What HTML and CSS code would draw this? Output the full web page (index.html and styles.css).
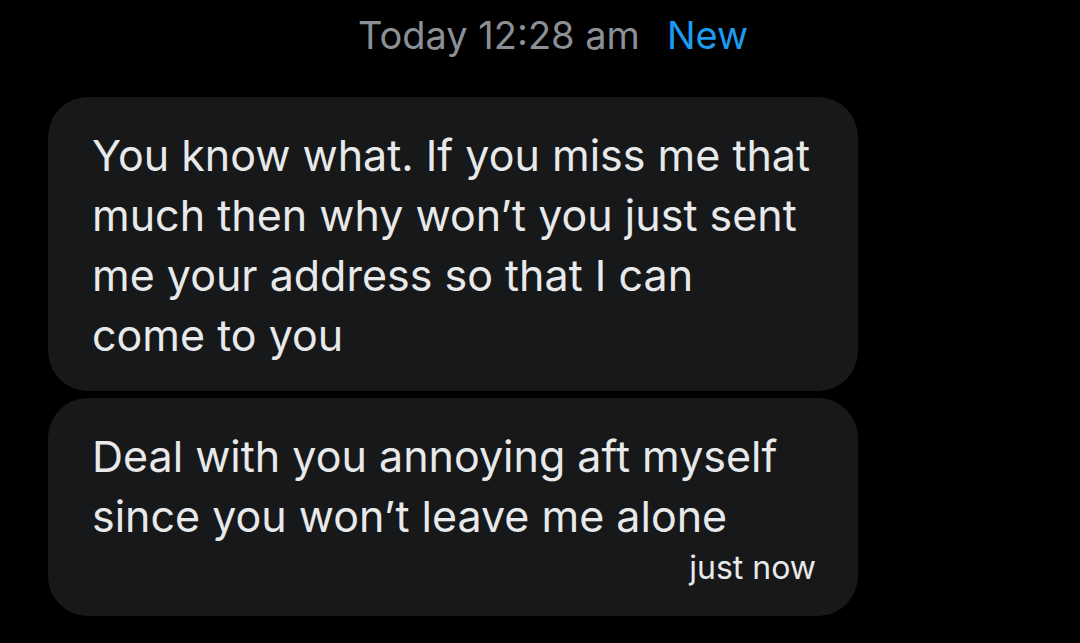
FILE: index.html
```html
<!DOCTYPE html>
<html>
<head>
<title>Messages</title>
<link rel="stylesheet" href="styles.css">
</head>
<body>

<div class="chat">
  <div class="chat-date">
    <span class="chat-time">Today 12:28 am</span>
    <span class="chat-new">New</span>
  </div>

  <div class="bubble">
    <p class="bubble-text">You know what. If you miss me that<br>much then why won’t you just sent<br>me your address so that I can<br>come to you</p>
  </div>

  <div class="bubble">
    <p class="bubble-text">Deal with you annoying aft myself<br>since you won’t leave me alone</p>
    <div class="bubble-meta">just now</div>
  </div>
</div>

</body>
</html>
```

FILE: styles.css
```css
html, body {
  margin: 0;
  padding: 0;
  background: #000;
  height: 100%;
}

body {
  font-family: "Inter", "Open Sans", sans-serif;
  color: #e7e9ea;
  overflow: hidden;
}

.chat {
  display: flex;
  flex-direction: column;
  align-items: flex-start;
  gap: 7px;
  padding: 10px 0 0 48px;
}

.chat-date {
  width: 810px;
  box-sizing: border-box;
  display: flex;
  justify-content: center;
  gap: 27px;
  font-size: 38px;
  line-height: 50px;
  padding-left: 200px;
  margin-bottom: 30px;
}

.chat-time {
  color: #8b9096;
}

.chat-new {
  color: #1d9bf0;
}

.bubble {
  width: 810px;
  box-sizing: border-box;
  background: #17181a;
  border-radius: 40px;
  padding: 28px 40px 26px 44px;
}

.bubble-text {
  margin: 0;
  font-size: 43px;
  line-height: 60px;
}

.bubble-meta {
  text-align: right;
  font-size: 32px;
  line-height: 44px;
  padding-right: 2px;
}
```
